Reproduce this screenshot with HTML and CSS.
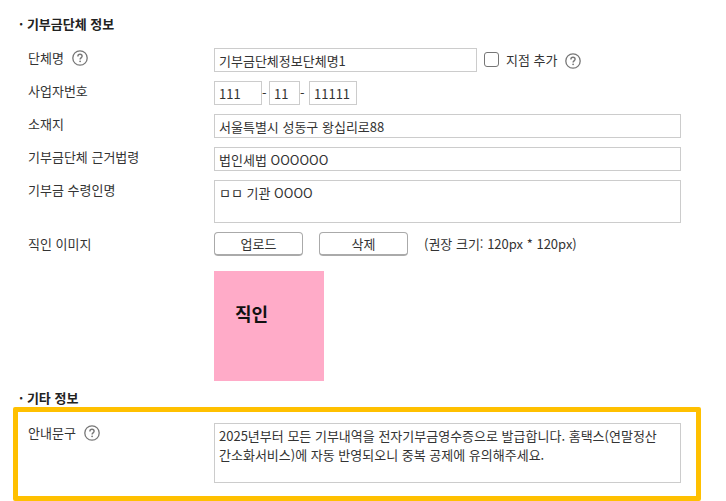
FILE: index.html
```html
<!DOCTYPE html>
<html lang="ko">
<head>
<meta charset="utf-8">
<title>기부금단체 정보</title>
<link rel="stylesheet" href="styles.css">
</head>
<body>
<svg class="defs" aria-hidden="true">
  <symbol id="help" viewBox="0 0 16 16">
    <circle cx="8" cy="8" r="7.2" fill="none" stroke="currentColor" stroke-width="1.3"/>
    <path d="M5.9 6.4C5.9 5.1 6.8 4.3 8 4.3s2.1.8 2.1 1.9c0 1.6-2 1.7-2 3.2" fill="none" stroke="currentColor" stroke-width="1.4"/>
    <circle cx="8.1" cy="11.3" r=".9" fill="currentColor"/>
  </symbol>
</svg>
<form class="page">
  <section class="group">
    <h2 class="title">· 기부금단체 정보</h2>
    <div class="row">
      <div class="head"><label for="org">단체명</label><button type="button" class="help" aria-label="도움말"><svg><use href="#help"/></svg></button></div>
      <div class="field">
        <input class="text org" id="org" type="text" value="기부금단체정보단체명1">
        <input class="check" id="branch" type="checkbox">
        <label for="branch">지점 추가</label>
        <button type="button" class="help" aria-label="도움말"><svg><use href="#help"/></svg></button>
      </div>
    </div>
    <div class="row">
      <div class="head"><label for="biz1">사업자번호</label></div>
      <div class="field">
        <input class="text part" id="biz1" type="text" value="111" aria-label="사업자번호">
        <span class="dash">-</span>
        <input class="text part short" type="text" value="11" aria-label="사업자번호">
        <span class="dash wide">-</span>
        <input class="text part" type="text" value="11111" aria-label="사업자번호">
      </div>
    </div>
    <div class="row">
      <div class="head"><label for="addr">소재지</label></div>
      <div class="field"><input class="text full" id="addr" type="text" value="서울특별시 성동구 왕십리로88"></div>
    </div>
    <div class="row">
      <div class="head"><label for="law">기부금단체 근거법령</label></div>
      <div class="field"><input class="text full" id="law" type="text" value="법인세법 OOOOOO"></div>
    </div>
    <div class="row">
      <div class="head"><label for="recipient">기부금 수령인명</label></div>
      <div class="field"><textarea class="text area" id="recipient">ㅁㅁ 기관 OOOO</textarea></div>
    </div>
    <div class="row">
      <div class="head seal-head">직인 이미지</div>
      <div class="field">
        <button type="button" class="btn">업로드</button>
        <button type="button" class="btn">삭제</button>
        <span>(권장 크기: 120px * 120px)</span>
      </div>
    </div>
    <div class="seal">직인</div>
  </section>
  <section>
    <h2 class="title">· 기타 정보</h2>
    <div class="highlight">
      <div class="row">
        <div class="head"><label for="notice">안내문구</label><button type="button" class="help" aria-label="도움말"><svg><use href="#help"/></svg></button></div>
        <div class="field"><textarea class="text area notice" id="notice">2025년부터 모든 기부내역을 전자기부금영수증으로 발급합니다. 홈택스(연말정산간소화서비스)에 자동 반영되오니 중복 공제에 유의해주세요.</textarea></div>
      </div>
    </div>
  </section>
</form>
</body>
</html>
```
FILE: styles.css
```css
* {
  box-sizing: border-box;
}

body {
  margin: 0;
  background: #fff;
  color: #333;
  font: 13px/20px "Noto Sans CJK KR", sans-serif;
}

input,
textarea,
button {
  margin: 0;
  color: inherit;
  font: inherit;
}

.defs {
  display: none;
}

.page {
  padding: 15px 25px 0 13px;
}

.title {
  margin: 0 0 0 6px;
  color: #222;
  font-size: 13px;
  font-weight: 700;
  line-height: 18px;
}

.group {
  padding-bottom: 8px;
}

.group .title {
  margin-bottom: 15px;
}

.row {
  display: flex;
  align-items: flex-start;
}

.group .row {
  margin: 0 20px 9px 15px;
}

.head {
  display: flex;
  flex: 0 0 186px;
  align-items: center;
  gap: 8px;
}

.seal-head {
  padding-top: 2px;
}

.field {
  display: flex;
  flex: 1;
  align-items: center;
  min-width: 0;
}

.help {
  display: flex;
  padding: 0;
  border: 0;
  background: none;
  color: #777;
}

.help svg {
  width: 16px;
  height: 16px;
}

.field .help {
  margin: 2px 0 0 8px;
}

.text {
  height: 24px;
  padding: 1px 4px 0;
  border: 1px solid #ccc;
  border-radius: 0;
  outline: 0;
  background: #fff;
}

.org {
  width: 263px;
}

.full,
.area {
  width: 100%;
}

.part {
  width: 48px;
}

.short {
  width: 31px;
}

.dash {
  width: 7px;
}

.wide {
  width: 9px;
}

.area {
  display: block;
  height: 43px;
  padding-top: 2px;
  line-height: 19px;
  overflow: hidden;
  resize: none;
}

.notice {
  height: 60px;
  padding-right: 14px;
}

.check {
  appearance: none;
  width: 15px;
  height: 15px;
  margin: 0 7px 2px;
  border: 1px solid #767676;
  border-radius: 3px;
  background: #fff;
}

.check:checked {
  background: #767676;
}

.btn {
  width: 89px;
  height: 24px;
  margin-right: 16px;
  padding: 0;
  border: 1px solid #aaa;
  border-bottom-width: 2px;
  border-radius: 4px;
  background: #fff;
}

.seal {
  width: 110px;
  height: 110px;
  margin: 15px 0 0 201px;
  padding: 28px 21px;
  background: #ffabc8;
  color: #111;
  font-size: 18px;
  font-weight: 700;
  line-height: 28px;
}

.highlight {
  padding: 11px 15px 13px 10px;
  border: 5px solid #ffc000;
  border-radius: 2px;
}
```
